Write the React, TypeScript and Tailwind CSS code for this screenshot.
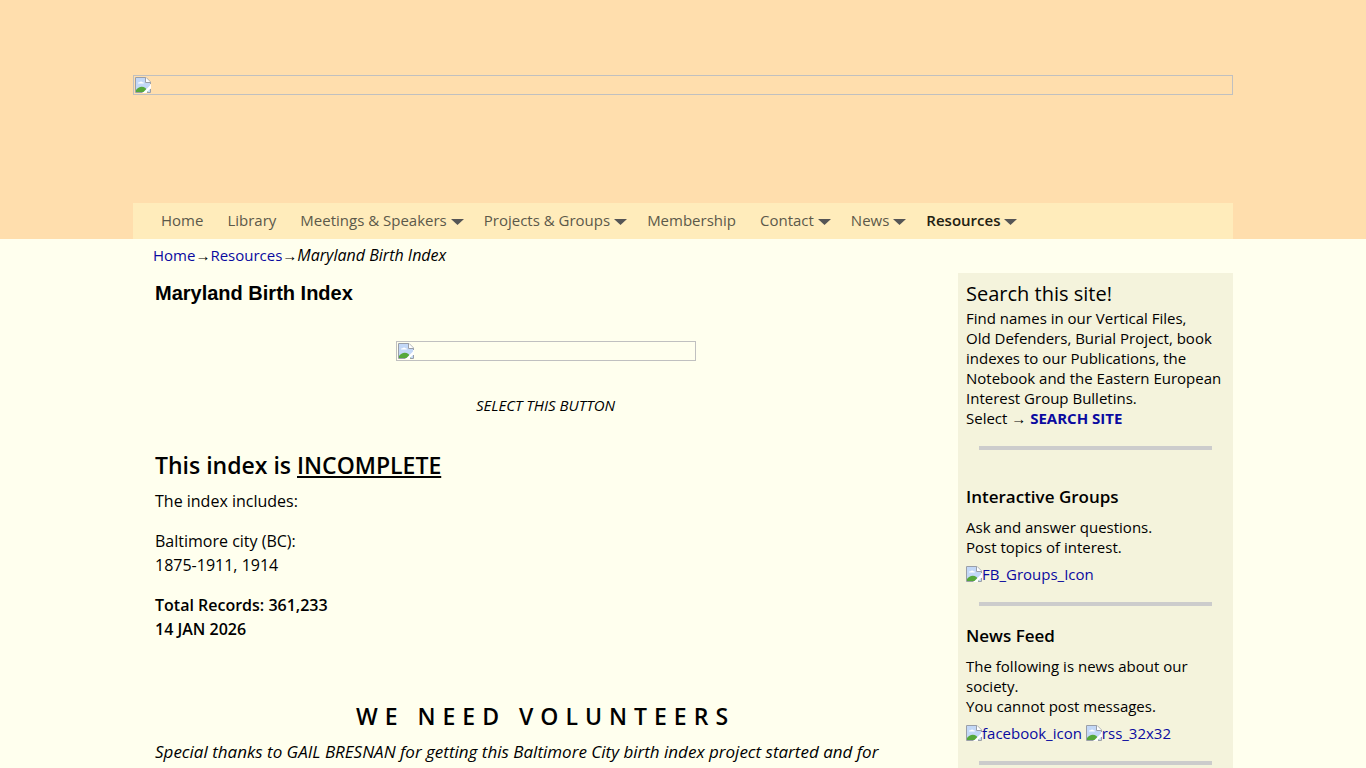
import type { ReactNode } from "react";

interface NavItem {
  label: string;
  hasMenu?: boolean;
  active?: boolean;
}

const NAV_ITEMS: NavItem[] = [
  { label: "Home" },
  { label: "Library" },
  { label: "Meetings & Speakers", hasMenu: true },
  { label: "Projects & Groups", hasMenu: true },
  { label: "Membership" },
  { label: "Contact", hasMenu: true },
  { label: "News", hasMenu: true },
  { label: "Resources", hasMenu: true, active: true },
];

function MissingImageIcon() {
  return (
    <svg width="16" height="16" viewBox="0 0 16 16" className="shrink-0" aria-hidden="true">
      <path d="M0.5 0.5H11L15.5 5V15.5H0.5Z" fill="#fff" />
      <path d="M1 1H10.5V5.5H15V15H1Z" fill="#c3d8f7" />
      <path d="M3 6.5C3 5.3 4.2 5 4.7 5.3C5.2 4.1 7 4.2 7.4 5.3C8.6 5.2 9 6 8.8 6.5Z" fill="#fff" />
      <path d="M1 15V13C3 10 7 8.5 10.5 11L13 15Z" fill="#55a83b" />
      <path d="M7.5 16L16 7.5V11L11 16Z" fill="#fff" />
      <path d="M0.5 15.5V0.5H11L15.5 5V7" fill="none" stroke="#9a9fa8" />
      <path d="M10.5 0.5V5.5H15.5" fill="#fff" stroke="#9a9fa8" />
      <path d="M0.5 15.5H7.5M12 15.5H15.5V12" fill="none" stroke="#9a9fa8" />
    </svg>
  );
}

function MissingImage({ label }: { label: string }) {
  return (
    <div role="img" aria-label={label} className="h-5 w-full border border-[#c0c0c0] p-px">
      <MissingImageIcon />
    </div>
  );
}

function IconLink({ children }: { children: ReactNode }) {
  return (
    <a href="#" className="flex items-center text-[#0a0aa0]">
      <MissingImageIcon />
      <span>{children}</span>
    </a>
  );
}

function Divider() {
  return <hr className="mx-[13px] border-0 border-t-4 border-[#ccc]" />;
}

function NavLink({ item }: { item: NavItem }) {
  return (
    <a
      href="#"
      className={`flex items-center gap-1 ${item.hasMenu ? "mr-5" : "mr-6"} ${
        item.active ? "font-semibold text-[#222011]" : "text-[#5c594a]"
      }`}
    >
      {item.label}
      {item.hasMenu && (
        <svg width="13" height="6" viewBox="0 0 13 6" className="mt-1" aria-hidden="true">
          <path d="M0 0H13L6.5 6Z" fill="#555" />
        </svg>
      )}
    </a>
  );
}

function Header() {
  return (
    <header className="bg-[#ffdead]">
      <div className="mx-auto max-w-[1100px] pt-[75px]">
        <MissingImage label="Site banner" />
        <nav className="mt-[108px] flex h-9 items-center bg-[#ffecbb] px-7 pb-0.5">
          {NAV_ITEMS.map((item) => (
            <NavLink key={item.label} item={item} />
          ))}
        </nav>
      </div>
    </header>
  );
}

function Sidebar() {
  return (
    <aside className="w-1/4 shrink-0 bg-[#f4f3dc] px-2 pt-[7px] leading-5">
      <section>
        <h2 className="text-xl leading-7 font-medium">Search this site!</h2>
        <p>
          Find names in our Vertical Files,
          <br />
          Old Defenders, Burial Project, book indexes to our Publications, the Notebook and the
          Eastern European Interest Group Bulletins.
          <br />
          Select →{" "}
          <a href="#" className="font-bold text-[#0a0aa0]">
            SEARCH SITE
          </a>
        </p>
      </section>
      <div className="pt-[18px] pb-[35px]">
        <Divider />
      </div>
      <section>
        <h3 className="mb-2 text-[17px] leading-6 font-semibold">Interactive Groups</h3>
        <p>
          Ask and answer questions.
          <br />
          Post topics of interest.
        </p>
        <div className="mt-[7px]">
          <IconLink>FB_Groups_Icon</IconLink>
        </div>
      </section>
      <div className="pt-[18px] pb-[18px]">
        <Divider />
      </div>
      <section>
        <h3 className="mb-2 text-[17px] leading-6 font-semibold">News Feed</h3>
        <p>
          The following is news about our society.
          <br />
          You cannot post messages.
        </p>
        <div className="mt-[7px] flex gap-1">
          <IconLink>facebook_icon</IconLink>
          <IconLink>rss_32x32</IconLink>
        </div>
      </section>
      <div className="py-[18px]">
        <Divider />
      </div>
    </aside>
  );
}

export default function App() {
  return (
    <div className="h-screen overflow-hidden bg-[#ffffee] font-['Open_Sans',sans-serif] text-[15px] text-black">
      <Header />
      <div className="mx-auto max-w-[1100px]">
        <div className="px-5 pt-1 pb-1.5 leading-6">
          <a href="#" className="text-[#0a0aa0]">Home</a>→
          <a href="#" className="text-[#0a0aa0]">Resources</a>→
          <em className="text-base">Maryland Birth Index</em>
        </div>
        <div className="flex">
          <main className="min-w-0 flex-1 px-[22px] text-base">
            <h1 className="pt-1.5 font-['Liberation_Sans',sans-serif] text-xl leading-7 font-bold">
              Maryland Birth Index
            </h1>
            <div className="mx-auto mt-[34px] w-[300px]">
              <MissingImage label="Search the index" />
            </div>
            <p className="mt-8 text-center text-[15px] leading-6 italic">SELECT THIS BUTTON</p>
            <h2 className="mt-8 text-[23px] leading-8 font-semibold">
              This index is <span className="underline">INCOMPLETE</span>
            </h2>
            <p className="mt-2">The index includes:</p>
            <p className="mt-4">
              Baltimore city (BC):
              <br />
              1875-1911, 1914
            </p>
            <p className="mt-4 font-semibold">
              Total Records: 361,233
              <br />
              14 JAN 2026
            </p>
            <h2 className="mt-[59px] text-center text-[23px] leading-8 font-semibold tracking-[7px]">
              WE NEED VOLUNTEERS
            </h2>
            <p className="mt-2 text-[17px] leading-6 italic">
              Special thanks to GAIL BRESNAN for getting this Baltimore City birth index project started and for
            </p>
          </main>
          <Sidebar />
        </div>
      </div>
    </div>
  );
}
